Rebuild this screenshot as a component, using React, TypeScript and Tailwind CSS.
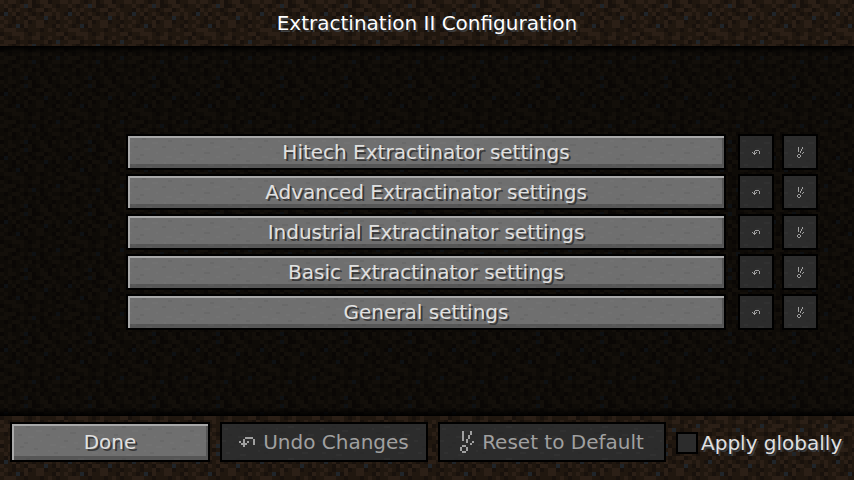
import React, { FC, ReactNode, useId } from "react";

// 16x16 dirt tile, one letter per texel
const DIRT = [
  "cbccbabcabccabbc",
  "bcbabcscaabccbab",
  "bacbcbbabccabcbb",
  "asbcabcbabaccbcb",
  "cbbacbaccbbsbacb",
  "bcbabbcabccabbab",
  "cbabsacbbccbbacb",
  "bcccbbabbbabcbab",
  "abbcccbabcbbbbcc",
  "cbabbcbbccabcbba",
  "bcccabbabbbcabsb",
  "ccbabcbcsbabbccb",
  "babccbabbcabcbba",
  "bbcabcbcabbabccb",
  "cbbabbcbbcabbabb",
  "abcbbcsabbcbacbc",
];

const LIGHT_DIRT: Record<string, string> = {
  a: "#18110c",
  b: "#20170f",
  c: "#2b1f16",
  s: "#20252a",
};

const DARK_DIRT: Record<string, string> = {
  a: "#0a0705",
  b: "#0e0b07",
  c: "#130f0a",
  s: "#0e1114",
};

// x, y, width, shade of the streaks in the stone
const STREAKS: [number, number, number, string][] = [
  [2, 4, 4, "l"], [14, 2, 4, "d"], [24, 6, 6, "l"], [40, 4, 4, "d"],
  [54, 4, 2, "l"], [66, 2, 6, "l"], [82, 6, 4, "d"], [6, 10, 4, "d"],
  [16, 12, 6, "l"], [34, 10, 4, "d"], [46, 12, 2, "l"], [58, 8, 6, "d"],
  [74, 12, 4, "l"], [86, 10, 6, "l"], [0, 16, 4, "l"], [12, 18, 4, "d"],
  [28, 16, 2, "l"], [38, 20, 6, "l"], [52, 16, 4, "d"], [62, 18, 4, "l"],
  [76, 16, 6, "d"], [88, 20, 4, "l"], [8, 22, 4, "d"], [22, 24, 4, "d"],
  [36, 26, 2, "l"], [48, 22, 6, "l"], [64, 24, 4, "d"], [72, 22, 4, "l"],
  [4, 28, 4, "l"], [18, 30, 6, "l"], [42, 28, 4, "d"], [80, 28, 6, "l"],
];

const UNDO = ["...####.", "..#....#", "#.#.#..#", ".###...#", "..#....."];

const RESET = [
  ".#...#.",
  ".#...#.",
  ".#..#..",
  ".#..#..",
  ".#.#...",
  "...#..#",
  ".....#.",
  ".##....",
  "#..#...",
  "#..#...",
  ".##....",
];

const Dirt: FC<{ dark?: boolean; offset?: number }> = ({ dark, offset = 0 }) => {
  const id = useId();
  const colors = dark ? DARK_DIRT : LIGHT_DIRT;
  return (
    <svg className="absolute inset-0 size-full" shapeRendering="crispEdges" aria-hidden="true">
      <pattern id={id} y={offset} width="64" height="64" patternUnits="userSpaceOnUse">
        {DIRT.map((row, y) =>
          row.split("").map((c, x) => (
            <rect key={`${x}-${y}`} x={x * 4} y={y * 4} width="4" height="4" fill={colors[c]} />
          ))
        )}
      </pattern>
      <rect width="100%" height="100%" fill={`url(#${id})`} />
    </svg>
  );
};

const Stone: FC = () => {
  const id = useId();
  return (
    <svg className="absolute inset-0 size-full" shapeRendering="crispEdges" aria-hidden="true">
      <pattern id={id} width="96" height="32" patternUnits="userSpaceOnUse">
        {STREAKS.map(([x, y, w, shade]) => (
          <rect
            key={`${x}-${y}`}
            x={x}
            y={y}
            width={w}
            height="2"
            fill={shade === "l" ? "#ffffff" : "#000000"}
            opacity={shade === "l" ? "0.025" : "0.05"}
          />
        ))}
      </pattern>
      <rect width="100%" height="100%" fill={`url(#${id})`} />
    </svg>
  );
};

const PixelIcon: FC<{ rows: string[]; scale?: number }> = ({ rows, scale = 1 }) => (
  <svg
    className="shrink-0"
    width={rows[0].length * scale}
    height={rows.length * scale}
    viewBox={`0 0 ${rows[0].length} ${rows.length}`}
    fill="currentColor"
    shapeRendering="crispEdges"
    aria-hidden="true"
  >
    {rows.map((row, y) =>
      row.split("").map((c, x) =>
        c === "#" ? <rect key={`${x}-${y}`} x={x} y={y} width="1" height="1" /> : null
      )
    )}
  </svg>
);

interface McButtonProps {
  className: string;
  disabled?: boolean;
  label?: string;
  children: ReactNode;
}

const McButton: FC<McButtonProps> = ({ className, disabled, label, children }) => (
  <button
    type="button"
    disabled={disabled}
    aria-label={label}
    className={`relative border-2 border-black whitespace-nowrap ${
      disabled
        ? "bg-[#2c2c2c] text-[#a0a0a0]"
        : "bg-[#6f6f6f] text-[#e0e0e0] [text-shadow:2px_2px_#383838] shadow-[inset_2px_2px_#a8a8a8,inset_-2px_-4px_#565656]"
    } ${className}`}
  >
    <Stone />
    <span className="relative flex items-center justify-center gap-2">{children}</span>
  </button>
);

const settings = [
  "Hitech Extractinator settings",
  "Advanced Extractinator settings",
  "Industrial Extractinator settings",
  "Basic Extractinator settings",
  "General settings",
];

const App: FC = () => {
  return (
    <div className="min-h-screen flex flex-col bg-black font-['DejaVu_Sans',sans-serif] text-[20px] leading-6">
      {/* Title */}
      <header className="relative h-[46px] flex items-center justify-center">
        <Dirt />
        <h1 className="relative text-white [text-shadow:2px_2px_#3e4042]">
          Extractination II Configuration
        </h1>
      </header>

      {/* Settings list */}
      <main className="relative flex-1 pt-22 pb-20 pl-[126px] pr-9">
        <Dirt dark offset={-30} />
        <div className="absolute inset-x-0 top-0 h-2 bg-linear-to-b from-black to-transparent" />
        <div className="absolute inset-x-0 bottom-0 h-2 bg-linear-to-t from-black to-transparent" />
        <ul className="relative flex flex-col gap-1">
          {settings.map((name) => (
            <li key={name} className="flex">
              <McButton className="flex-1 h-9">{name}</McButton>
              <McButton className="size-9 ml-3" disabled label={`Undo changes to ${name}`}>
                <PixelIcon rows={UNDO} />
              </McButton>
              <McButton className="size-9 ml-2" disabled label={`Reset ${name} to default`}>
                <PixelIcon rows={RESET} />
              </McButton>
            </li>
          ))}
        </ul>
      </main>

      {/* Actions */}
      <footer className="relative h-16 px-[10px] pt-[6px]">
        <Dirt offset={-32} />
        <div className="relative flex gap-[10px]">
          <McButton className="w-50 h-10">Done</McButton>
          <McButton className="w-52 h-10" disabled>
            <PixelIcon rows={UNDO} scale={2} />
            Undo Changes
          </McButton>
          <McButton className="w-57 h-10" disabled>
            <PixelIcon rows={RESET} scale={2} />
            Reset to Default
          </McButton>
          <label className="flex items-center gap-[3px] pt-[2px] whitespace-nowrap text-[#e0e0e0] [text-shadow:2px_2px_#383c40]">
            <input
              type="checkbox"
              className="appearance-none size-[22px] border-2 border-black bg-[#2c2c2c] checked:bg-[#6f6f6f]"
            />
            Apply globally
          </label>
        </div>
      </footer>
    </div>
  );
};

export default App;
